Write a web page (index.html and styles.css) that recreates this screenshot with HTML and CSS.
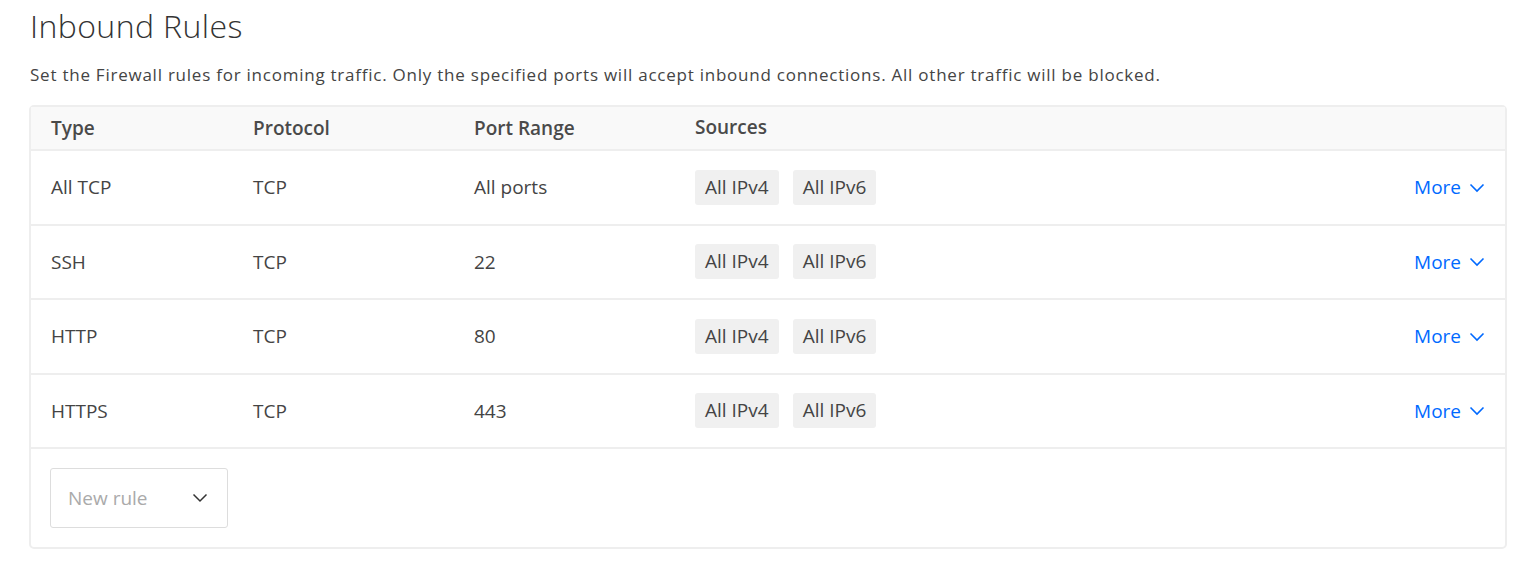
FILE: index.html
```html
<!DOCTYPE html>
<html>
<head>
<meta charset="utf-8">
<link rel="stylesheet" href="styles.css">
</head>
<body>
<div class="page">
  <h1 class="title">Inbound Rules</h1>
  <p class="desc">Set the Firewall rules for incoming traffic. Only the specified ports will accept inbound connections. All other traffic will be blocked.</p>
  <div class="table">
    <div class="row head">
      <div class="cell">Type</div>
      <div class="cell">Protocol</div>
      <div class="cell">Port Range</div>
      <div class="cell src-head">Sources</div>
      <div class="cell"></div>
    </div>
    <div class="row">
      <div class="cell">All TCP</div>
      <div class="cell">TCP</div>
      <div class="cell">All ports</div>
      <div class="cell tags"><span class="tag">All IPv4</span><span class="tag">All IPv6</span></div>
      <div class="cell more">More <svg class="chev" viewBox="0 0 16 10" width="16" height="10"><path d="M1.5 1.5 L8 8 L14.5 1.5" fill="none" stroke="#0069ff" stroke-width="1.6"/></svg></div>
    </div>
    <div class="row">
      <div class="cell">SSH</div>
      <div class="cell">TCP</div>
      <div class="cell">22</div>
      <div class="cell tags"><span class="tag">All IPv4</span><span class="tag">All IPv6</span></div>
      <div class="cell more">More <svg class="chev" viewBox="0 0 16 10" width="16" height="10"><path d="M1.5 1.5 L8 8 L14.5 1.5" fill="none" stroke="#0069ff" stroke-width="1.6"/></svg></div>
    </div>
    <div class="row">
      <div class="cell">HTTP</div>
      <div class="cell">TCP</div>
      <div class="cell">80</div>
      <div class="cell tags"><span class="tag">All IPv4</span><span class="tag">All IPv6</span></div>
      <div class="cell more">More <svg class="chev" viewBox="0 0 16 10" width="16" height="10"><path d="M1.5 1.5 L8 8 L14.5 1.5" fill="none" stroke="#0069ff" stroke-width="1.6"/></svg></div>
    </div>
    <div class="row">
      <div class="cell">HTTPS</div>
      <div class="cell">TCP</div>
      <div class="cell">443</div>
      <div class="cell tags"><span class="tag">All IPv4</span><span class="tag">All IPv6</span></div>
      <div class="cell more">More <svg class="chev" viewBox="0 0 16 10" width="16" height="10"><path d="M1.5 1.5 L8 8 L14.5 1.5" fill="none" stroke="#0069ff" stroke-width="1.6"/></svg></div>
    </div>
    <div class="foot">
      <div class="select"><span>New rule</span><svg viewBox="0 0 16 10" width="16" height="10"><path d="M1.5 1.5 L8 8 L14.5 1.5" fill="none" stroke="#333" stroke-width="1.5"/></svg></div>
    </div>
  </div>
</div>
</body>
</html>
```
FILE: styles.css
```css
* { box-sizing: border-box; }
body {
  margin: 0;
  background: #fff;
  font-family: "Open Sans", "Noto Sans", sans-serif;
  color: #444;
}
.page {
  padding: 0 12px 0 30px;
}
.title {
  margin: 0;
  padding-top: 6px;
  font-size: 32px;
  font-weight: 300;
  color: #333;
  line-height: 40px;
  letter-spacing: 0.4px;
}
.desc {
  margin: 17px 0 0;
  font-size: 17px;
  line-height: 24px;
  color: #444;
  letter-spacing: 0.76px;
}
.table {
  margin-top: 18px;
  margin-left: -1px;
  border: 2px solid #eee;
  border-radius: 5px;
  width: 1478px;
}
.row {
  display: grid;
  grid-template-columns: 202px 221px 221px 1fr auto;
  align-items: center;
  height: 74.5px;
  padding: 0 20px 0 20px;
  border-bottom: 2px solid #eee;
  font-size: 19px;
  color: #444;
}
.row.head {
  height: 44px;
  background: #f9f9f9;
  font-weight: 600;
  color: #4a4a4a;
}
.src-head { margin-top: -3px; }
.tags { display: flex; gap: 14px; }
.tag {
  background: #f0f0f0;
  border-radius: 3px;
  padding: 0 10px;
  height: 35px;
  line-height: 35px;
  color: #444;
}
.more {
  color: #0069ff;
  display: flex;
  align-items: center;
  gap: 8px;
}
.chev { margin-top: 1px; }
.foot {
  padding: 19px 19px 19px;
}
.select {
  width: 178px;
  height: 60px;
  border: 1px solid #ddd;
  border-radius: 3px;
  display: flex;
  align-items: center;
  justify-content: space-between;
  padding: 0 19px 0 17px;
  font-size: 19px;
  color: #aaa;
}
```
